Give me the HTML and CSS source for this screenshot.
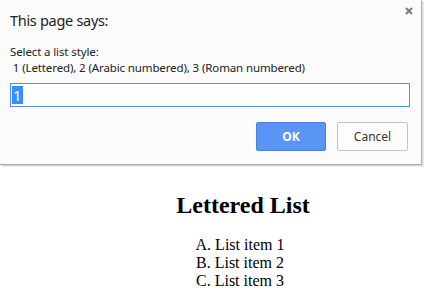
FILE: index.html
```html
<!DOCTYPE html>
<html>
<head>
<meta charset="utf-8">
<link rel="stylesheet" href="styles.css">
</head>
<body>
<div class="page">
  <h2 class="title">Lettered List</h2>
  <ol class="list">
    <li>List item 1</li>
    <li>List item 2</li>
    <li>List item 3</li>
  </ol>
</div>
<div class="dialog">
  <svg class="close" width="8" height="8" viewBox="0 0 8 8"><path d="M1 1L7 7M7 1L1 7" stroke="#7a7a7a" stroke-width="2"/></svg>
  <div class="dlg-title">This page says:</div>
  <div class="msg">Select a list style:<br>&nbsp;1 (Lettered), 2 (Arabic numbered), 3 (Roman numbered)</div>
  <div class="field"><span class="sel">1</span></div>
  <div class="buttons">
    <div class="btn ok">OK</div>
    <div class="btn cancel">Cancel</div>
  </div>
</div>
</body>
</html>
```
FILE: styles.css
```css
html, body {
  margin: 0;
  padding: 0;
  background: #fff;
}
body {
  width: 431px;
  height: 296px;
  overflow: hidden;
  position: relative;
}
.page {
  font-family: "Liberation Serif", serif;
  color: #000;
  text-align: center;
  padding: 191px 0 0 55px;
}
.title {
  font-size: 24px;
  font-weight: bold;
  margin: 0 0 17px;
  line-height: 28px;
}
.list {
  list-style-type: upper-alpha;
  list-style-position: inside;
  margin: 0;
  padding: 0 6px 0 0;
  font-size: 16px;
  line-height: 18px;
}
.dialog {
  position: absolute;
  left: 0;
  top: 0;
  width: 422px;
  height: 165px;
  box-sizing: border-box;
  background: #fbfbfb;
  border-right: 1px solid #b4b4b4;
  border-bottom: 1px solid #a8a8a8;
  box-shadow: 1px 1px 0 #d8d8d8, 2px 2px 0 #ececec;
  font-family: "Noto Sans", sans-serif;
  color: #222;
  padding: 0 0 0 10px;
}
.close {
  position: absolute;
  left: 405px;
  top: 7px;
}
.dlg-title {
  font-size: 14.5px;
  letter-spacing: -0.3px;
  line-height: 20px;
  padding-top: 10px;
  color: #222;
}
.msg {
  font-size: 11.5px;
  letter-spacing: -0.12px;
  line-height: 16px;
  margin-top: 14px;
}
.field {
  margin-top: 7px;
  width: 400px;
  height: 24px;
  box-sizing: border-box;
  border: 1px solid #4d90fe;
  background: #fff;
  padding: 2px 0 0 1px;
  font-size: 15px;
  line-height: 18px;
}
.sel {
  background: #3390ff;
  color: #fff;
  display: inline-block;
  padding: 0 1px;
}
.buttons {
  display: flex;
  justify-content: flex-end;
  gap: 11px;
  margin-top: 15px;
  padding-right: 13px;
}
.btn {
  height: 29px;
  box-sizing: border-box;
  font-size: 12px;
  line-height: 27px;
  text-align: center;
  border-radius: 2px;
}
.ok {
  width: 70px;
  background: #5a95f5;
  border: 1px solid #4a82dd;
  color: #fff;
  font-weight: bold;
}
.cancel {
  width: 71px;
  background: #fdfdfd;
  border: 1px solid #c4c4c4;
  color: #333;
}
```
